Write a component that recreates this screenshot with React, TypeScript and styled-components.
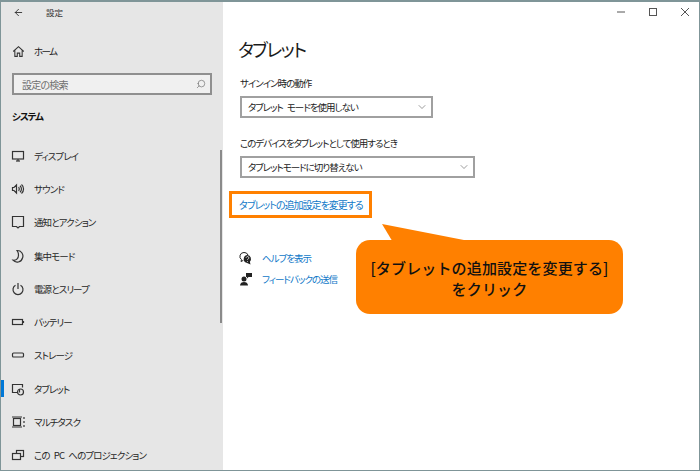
import React from 'react';
import styled, { createGlobalStyle } from 'styled-components';
import { FiArrowLeft, FiSearch, FiChevronDown } from 'react-icons/fi';

const GlobalStyle = createGlobalStyle`
  html, body {
    margin: 0;
    padding: 0;
    background: #fff;
  }
  body {
    font-family: "Noto Sans CJK JP", "Noto Sans", sans-serif;
    font-feature-settings: "palt";
  }
`;

const Window = styled.div`
  position: relative;
  box-sizing: border-box;
  width: 700px;
  height: 471px;
  display: flex;
  overflow: hidden;
  background: #fff;
  border: 1px solid #7f9598;
  border-top-width: 2px;
`;

const Sidebar = styled.aside`
  position: relative;
  width: 222px;
  flex-shrink: 0;
  display: flex;
  flex-direction: column;
  background: #e6e6e6;
  color: #1a1a1a;

  & > * {
    flex-shrink: 0;
  }
`;

const TitleRow = styled.div`
  height: 20px;
  display: flex;
  align-items: center;
  gap: 22px;
  padding-left: 12px;
  font-size: 8.5px;
  color: #333;
`;

const HomeRow = styled.div`
  margin-top: 17px;
  height: 24px;
  display: flex;
  align-items: center;
  gap: 9px;
  padding-left: 11px;
  font-size: 9.5px;
  letter-spacing: -1.6px;
`;

const SearchBox = styled.div`
  box-sizing: border-box;
  margin: 10px 0 0 11px;
  width: 200px;
  height: 22px;
  display: flex;
  align-items: center;
  justify-content: space-between;
  padding: 0 4px 0 8px;
  background: #f0f0f0;
  border: 2px solid #8f8f8f;
  font-size: 10px;
  letter-spacing: -0.8px;
  color: #6f6f6f;
`;

const SectionTitle = styled.div`
  margin: 11px 0 0 11px;
  height: 20px;
  line-height: 20px;
  font-size: 9.5px;
  letter-spacing: -1px;
  font-weight: 700;
  color: #111;
`;

const NavList = styled.nav`
  margin-top: 13px;
  display: flex;
  flex-direction: column;
`;

const NavItem = styled.div<{ $active?: boolean }>`
  position: relative;
  height: 33.3px;
  display: flex;
  align-items: center;
  gap: 7px;
  padding-left: 8px;
  font-size: 9.5px;
  letter-spacing: -0.9px;
  word-spacing: 3px;
  color: #262626;

  &::before {
    content: '';
    display: ${p => (p.$active ? 'block' : 'none')};
    position: absolute;
    left: 0;
    top: 8px;
    width: 3px;
    height: 17px;
    background: #0078d7;
  }
`;

const IconSlot = styled.span`
  width: 18px;
  height: 18px;
  display: flex;
  align-items: center;
  justify-content: center;
  flex-shrink: 0;
`;

const ScrollThumb = styled.div`
  position: absolute;
  top: 148px;
  right: 1px;
  width: 2px;
  height: 173px;
  background: #8a8a8a;
`;

const Main = styled.main`
  flex: 1;
  display: flex;
  flex-direction: column;
  align-items: flex-start;
  padding-left: 6px;
`;

const WindowControls = styled.div`
  align-self: flex-end;
  height: 20px;
  display: flex;
  align-items: center;
  gap: 22px;
  padding-right: 9px;
  color: #555;
`;

const PageTitle = styled.h1`
  margin: 12px 0 0 9px;
  height: 30px;
  line-height: 30px;
  font-size: 18px;
  letter-spacing: -1.6px;
  font-weight: 400;
  color: #1a1a1a;
`;

const FieldLabel = styled.div<{ $gap: number }>`
  margin: ${p => p.$gap}px 0 0 11px;
  height: 16px;
  line-height: 16px;
  font-size: 9.5px;
  letter-spacing: -1px;
  color: #222;
`;

const Select = styled.div<{ $width: number }>`
  box-sizing: border-box;
  margin: 5px 0 0 11px;
  width: ${p => p.$width}px;
  height: 22px;
  display: flex;
  align-items: center;
  justify-content: space-between;
  padding: 0 3px 1px 6px;
  border: 2px solid #a0a0a0;
  font-size: 9.5px;
  letter-spacing: -1px;
  word-spacing: 3px;
  color: #1a1a1a;
`;

const Highlight = styled.div`
  box-sizing: border-box;
  margin: 13px 0 0 0;
  width: 143px;
  height: 27px;
  display: flex;
  align-items: center;
  padding-left: 7px;
  border: 3px solid #ff8000;
`;

const Link = styled.a<{ $tight?: boolean }>`
  font-size: ${p => (p.$tight ? '9.5px' : '10px')};
  letter-spacing: -1px;
  color: #0f78c8;
  white-space: nowrap;
`;

const HelpList = styled.div`
  margin: 31px 0 0 10px;
  display: flex;
  flex-direction: column;
  gap: 3px;
`;

const HelpRow = styled.div`
  height: 18px;
  display: flex;
  align-items: center;
  gap: 9px;
`;

const Callout = styled.div`
  position: absolute;
  left: 355px;
  top: 238px;
  box-sizing: border-box;
  width: 267px;
  height: 74px;
  padding-top: 1px;
  display: flex;
  flex-direction: column;
  align-items: center;
  justify-content: center;
  background: #ff8000;
  border-radius: 14px;
  font-size: 15px;
  font-weight: 500;
  line-height: 21px;
  letter-spacing: 0.15px;
  color: #111;
  font-feature-settings: normal;
`;

const CalloutTail = styled.svg`
  position: absolute;
  left: 381px;
  top: 222px;
`;

const line = { fill: 'none', stroke: '#333', strokeWidth: 1.2 };

const icons: Record<string, React.ReactNode> = {
  display: <><rect x="2.5" y="3.5" width="11" height="7.500" {...line} /><path d="M6 13h4" {...line} /><path d="M8 11v2" {...line} /></>,
  sound: <><path d="M2.500 6.500v3h1.500l2.500 2.500v-8l-2.500 2.500z" {...line} /><path d="M8.500 6.200a2.500 2.500 0 010 3.600M10 4.700a4.500 4.500 0 010 6.600M11.500 3.500a6 6 0 010 9" {...line} /></>,
  notify: <path d="M2.500 2.500h11v10h-4l-1.500 1.500-1.500-1.500h-4z" {...line} />,
  focus: <path d="M7 2.500a5.500 5.500 0 015.500 7.500 5.500 5.500 0 01-9.500 2.200c2.500.3 5.500-.8 5.500-5 0-2-.6-3.500-1.500-4.700z" {...line} />,
  power: <><path d="M5.500 4.200a5 5 0 105 0" {...line} /><path d="M8 2v6" {...line} /></>,
  battery: <><rect x="2.500" y="5.500" width="10" height="5" {...line} /><path d="M13.500 7v2" {...line} /></>,
  storage: <rect x="2.500" y="6" width="11" height="4" rx="1" {...line} />,
  tablet: <><path d="M7.500 11.500h-5v-8h10v3" {...line} /><circle cx="10.500" cy="11" r="3" {...line} /><path d="M9.500 8v3.500" {...line} /></>,
  multitask: <><rect x="3.500" y="4.500" width="7" height="7" {...line} /><path d="M2 3h10M2 13h10M14 3v2M14 7v2M14 11v2" {...line} /></>,
  project: <><rect x="6.500" y="3.500" width="7" height="6" {...line} /><rect x="2.500" y="6.500" width="8" height="6" fill="#e6e6e6" stroke="#333" strokeWidth="1.200" /></>,
};

const NavIcon = ({ name }: { name: string }) => (
  <IconSlot>
    <svg width="16" height="16" viewBox="0 0 16 16">{icons[name]}</svg>
  </IconSlot>
);

const navItems = [
  { icon: 'display', label: 'ディスプレイ' },
  { icon: 'sound', label: 'サウンド' },
  { icon: 'notify', label: '通知とアクション' },
  { icon: 'focus', label: '集中モード' },
  { icon: 'power', label: '電源とスリープ' },
  { icon: 'battery', label: 'バッテリー' },
  { icon: 'storage', label: 'ストレージ' },
  { icon: 'tablet', label: 'タブレット', active: true },
  { icon: 'multitask', label: 'マルチタスク' },
  { icon: 'project', label: 'この PC へのプロジェクション' },
];

const App: React.FC = () => (
  <>
    <GlobalStyle />
    <Window>
      <Sidebar>
        <TitleRow>
          <FiArrowLeft size={11} color="#333" />
          <span>設定</span>
        </TitleRow>
        <HomeRow>
          <svg width="13" height="13" viewBox="0 0 16 16">
            <path d="M1.500 8L8 2l6.500 6M3.500 6.500V14h3v-4h3v4h3V6.500" fill="none" stroke="#333" strokeWidth="1.300" />
          </svg>
          <span>ホーム</span>
        </HomeRow>
        <SearchBox>
          <span>設定の検索</span>
          <FiSearch size={10} color="#666" strokeWidth={1.5} style={{ transform: 'scaleX(-1)' }} />
        </SearchBox>
        <SectionTitle>システム</SectionTitle>
        <NavList>
          {navItems.map(item => (
            <NavItem key={item.label} $active={item.active}>
              <NavIcon name={item.icon} />
              <span>{item.label}</span>
            </NavItem>
          ))}
        </NavList>
        <ScrollThumb />
      </Sidebar>
      <Main>
        <WindowControls>
          <svg width="10" height="10" viewBox="0 0 10 10"><path d="M1 5h8" stroke="#555" /></svg>
          <svg width="10" height="10" viewBox="0 0 10 10"><rect x="1.500" y="1.500" width="7" height="7" fill="none" stroke="#555" /></svg>
          <svg width="10" height="10" viewBox="0 0 10 10"><path d="M1 1l8 8M9 1l-8 8" stroke="#555" /></svg>
        </WindowControls>
        <PageTitle>タブレット</PageTitle>
        <FieldLabel $gap={11}>サインイン時の動作</FieldLabel>
        <Select $width={193}>
          <span>タブレット モードを使用しない</span>
          <FiChevronDown size={12} color="#666" strokeWidth={1.3} />
        </Select>
        <FieldLabel $gap={17}>このデバイスをタブレットとして使用するとき</FieldLabel>
        <Select $width={235}>
          <span>タブレットモードに切り替えない</span>
          <FiChevronDown size={12} color="#666" strokeWidth={1.3} />
        </Select>
        <Highlight>
          <Link>タブレットの追加設定を変更する</Link>
        </Highlight>
        <HelpList>
          <HelpRow>
            <svg width="14" height="14" viewBox="0 0 14 14">
              <path d="M5 1.500a4 4 0 00-2.500 7.200L2 10.500l2.300-1.100" fill="none" stroke="#222" />
              <path d="M5 1.500a4 4 0 014 2.500" fill="none" stroke="#222" />
              <path d="M8.500 4a4 4 0 00-1 7.800l4 1.700-.6-2.800A4 4 0 008.500 4z" fill="#222" />
              <path d="M7.200 6.800a1.300 1.300 0 112 1.100c-.5.300-.7.500-.7 1M8.500 10v.8" fill="none" stroke="#fff" strokeWidth=".8" />
            </svg>
            <Link $tight>ヘルプを表示</Link>
          </HelpRow>
          <HelpRow>
            <svg width="14" height="14" viewBox="0 0 14 14">
              <circle cx="5" cy="7" r="2.500" fill="#222" />
              <path d="M1 13.500c0-2.500 2-3.500 4-3.500s4 1 4 3.500z" fill="#222" />
              <path d="M7 1h6v4H9.500L8 6.500V5H7z" fill="#222" />
            </svg>
            <Link $tight>フィードバックの送信</Link>
          </HelpRow>
        </HelpList>
      </Main>
      <CalloutTail width="90" height="30" viewBox="0 0 90 30">
        <path d="M0 0L87 17V30H18z" fill="#ff8000" />
      </CalloutTail>
      <Callout>
        <span>[タブレットの追加設定を変更する]</span>
        <span>をクリック</span>
      </Callout>
    </Window>
  </>
);

export default App;
